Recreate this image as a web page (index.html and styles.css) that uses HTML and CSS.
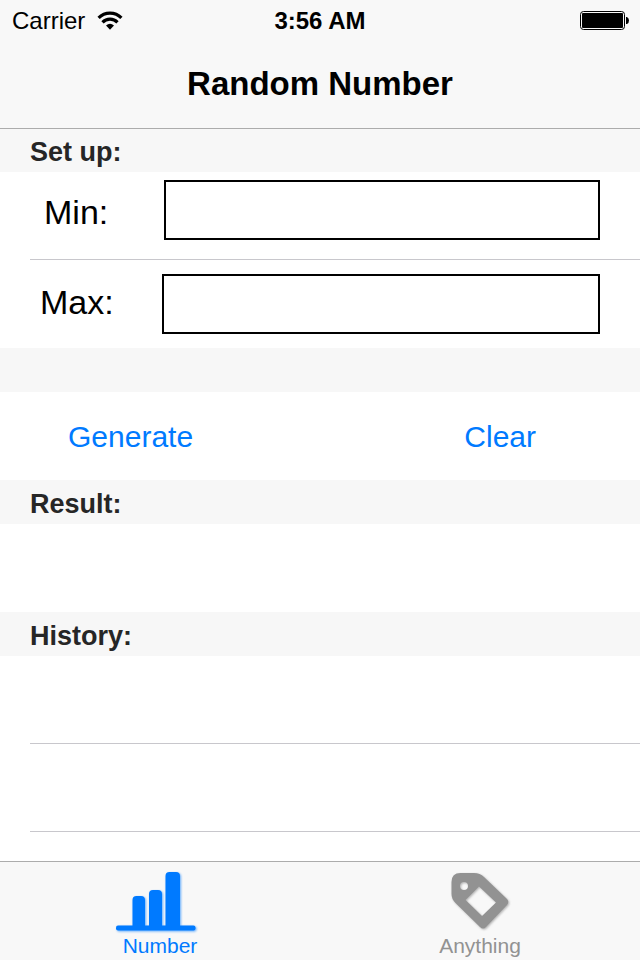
FILE: index.html
```html
<!DOCTYPE html>
<html lang="en">
<head>
<meta charset="utf-8">
<meta name="viewport" content="width=device-width, initial-scale=1">
<title>Random Number</title>
<link rel="stylesheet" href="styles.css">
</head>
<body>
<header class="top">
  <div class="status">
    <div class="carrier">
      <span>Carrier</span>
      <svg class="wifi" viewBox="0 0 26 20" aria-hidden="true">
        <path d="M1.600 6.800A16 16 0 0 1 24.400 6.800" fill="none" stroke="#000" stroke-width="3.200"/>
        <path d="M5.500 11.300A10.500 10.500 0 0 1 20.500 11.300" fill="none" stroke="#000" stroke-width="3.200"/>
        <path d="M9 14.400Q13 11 17 14.400L13 18.800Z"/>
      </svg>
    </div>
    <span class="time">3:56 AM</span>
    <svg class="battery" viewBox="0 0 50 20" aria-hidden="true">
      <rect x=".5" y=".5" width="44" height="18" rx="3" fill="none" stroke="#000"/>
      <rect x="2" y="2" width="41" height="15" rx="1"/>
      <path d="M46 6h1q2 1 2 3.500t-2 3.500h-1z"/>
    </svg>
  </div>
  <h1 class="title">Random Number</h1>
</header>
<main class="content">
  <h2 class="heading">Set up:</h2>
  <div class="row field-row min-row">
    <label for="min">Min:</label>
    <input id="min" type="text" inputmode="numeric">
  </div>
  <div class="row field-row max-row">
    <label for="max">Max:</label>
    <input id="max" type="text" inputmode="numeric">
  </div>
  <div class="heading"></div>
  <div class="row actions">
    <button type="button">Generate</button>
    <button type="button">Clear</button>
  </div>
  <h2 class="heading">Result:</h2>
  <div class="row"></div>
  <h2 class="heading">History:</h2>
  <div class="row divided"></div>
  <div class="row divided"></div>
</main>
<nav class="tabs">
  <a class="tab active" href="#number">
    <svg class="tab-icon" viewBox="0 0 96 72" aria-hidden="true">
      <path d="M20.500 65V38q0-4 4-4H29q4 0 4 4V65zM37 65V32q0-4 4-4h5q4 0 4 4V65zM53.500 65V14q0-4 4-4h6.500q4 0 4 4V65z"/>
      <rect x="4" y="63.500" width="79.500" height="5" rx="2"/>
    </svg>
    <span>Number</span>
  </a>
  <a class="tab" href="#anything">
    <svg class="tab-icon" viewBox="0 0 96 72" aria-hidden="true">
      <path fill-rule="evenodd" d="M19.500 20Q19.500 11 28.500 11L42 11Q48 11 52 15L75 37Q77.500 40 75 43L54 65Q51 68 48 65L23.500 41Q19.500 37 19.500 32ZM47 24.500L33.500 38L50 54L64 40.500ZM36 24a4 4 0 1 0-8 0a4 4 0 1 0 8 0Z"/>
    </svg>
    <span>Anything</span>
  </a>
</nav>
</body>
</html>
```
FILE: styles.css
```css
* {
  box-sizing: border-box;
}

body {
  margin: 0;
  min-height: 100vh;
  display: flex;
  flex-direction: column;
  background: #fff;
  color: #000;
  font-family: "Liberation Sans", Arial, sans-serif;
}

.top {
  position: relative;
  background: #f8f8f8;
  box-shadow: 0 1px #acacac;
}

.status {
  display: grid;
  grid-template-columns: 1fr auto 1fr;
  align-items: center;
  height: 40px;
  padding: 2px 10px 0;
  font-size: 24px;
}

.carrier {
  display: flex;
  align-items: center;
  gap: 12px;
  padding-left: 2px;
}

.wifi {
  width: 26px;
  height: 20px;
}

.time {
  font-weight: bold;
}

.battery {
  justify-self: end;
  width: 50px;
  height: 20px;
}

.title {
  margin: 0;
  font-size: 33px;
  line-height: 88px;
  text-align: center;
}

.content {
  flex: 1;
}

.heading {
  height: 44px;
  margin: 0;
  padding: 0 30px;
  background: #f7f7f7;
  color: #262626;
  font-size: 27px;
  line-height: 48px;
}

.row {
  height: 88px;
}

.field-row {
  display: flex;
  font-size: 34px;
  line-height: 60px;
}

.field-row input {
  flex: 1;
  min-width: 0;
  height: 60px;
  padding: 0 12px;
  border: 2px solid #000;
  border-radius: 0;
  background: #fff;
  font: inherit;
}

.min-row {
  padding: 8px 40px 20px 44px;
}

.min-row label {
  width: 120px;
  line-height: 64px;
}

.max-row {
  padding: 14px 40px;
}

.max-row label {
  width: 122px;
  line-height: 56px;
}

.min-row,
.divided {
  background: linear-gradient(#c8c7cc, #c8c7cc) 30px 100% / 100% 1px no-repeat;
}

.actions {
  display: flex;
  justify-content: space-between;
  padding: 2px 104px 0 68px;
}

.actions button {
  padding: 0;
  border: 0;
  background: none;
  color: #007aff;
  font: inherit;
  font-size: 30px;
}

.tabs {
  display: flex;
  border-top: 1px solid #acacac;
  background: #f8f8f8;
}

.tab {
  flex: 1;
  display: flex;
  flex-direction: column;
  align-items: center;
  padding-bottom: 2px;
  color: #929292;
  font-size: 21px;
  line-height: 24px;
  text-decoration: none;
}

.tab.active {
  color: #007aff;
}

.tab-icon {
  width: 96px;
  height: 72px;
  fill: currentColor;
  filter: drop-shadow(1px 1px 1px rgb(0 122 255 / 60%));
}

.tab:not(.active) .tab-icon {
  filter: drop-shadow(1px 1px 1px rgb(146 146 146 / 70%));
}
```
